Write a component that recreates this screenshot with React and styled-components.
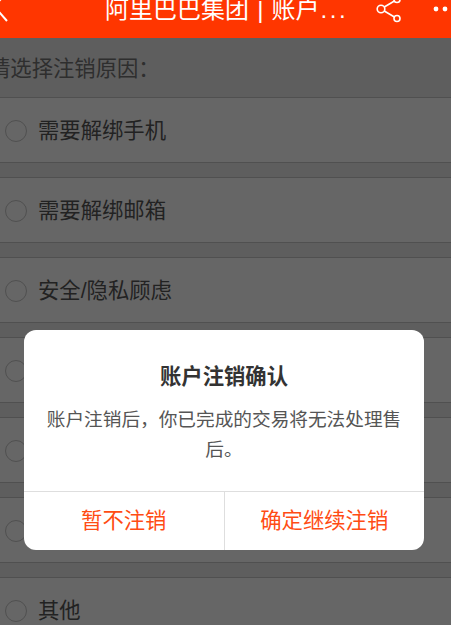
import React from "react";
import styled, { createGlobalStyle } from "styled-components";

const GlobalStyle = createGlobalStyle`
	html, body {
		margin: 0;
		padding: 0;
		height: 100%;
		overflow: hidden;
		background-color: #5e5e5e;
		font-family: "Liberation Sans", "Noto Sans CJK SC", sans-serif;
	}
`;

const Page = styled("div")`
	position: relative;
	width: 451px;
	height: 625px;
	overflow: hidden;
	background-color: #5e5e5e;
`;

const Header = styled("div")`
	display: flex;
	align-items: flex-start;
	height: 38px;
	background-color: #ff3600;
	color: #fff;
	overflow: hidden;
`;

const BackButton = styled("div")`
	width: 105px;
	flex-shrink: 0;
	display: flex;
`;

const Title = styled("div")`
	width: 269px;
	flex-shrink: 0;
	margin-top: -7px;
	font-size: 24px;
	line-height: 34px;
	word-spacing: 1.5px;
	white-space: nowrap;
`;

const TitleDots = styled("span")`
	margin-left: 1px;
	letter-spacing: 2.5px;
`;

const HeaderIcons = styled("div")`
	display: flex;
	align-items: flex-start;
	gap: 31px;
`;

const Prompt = styled("div")`
	height: 59px;
	margin-left: -11px;
	font-size: 21.33px;
	line-height: 62px;
	color: #2e2e2e;
	white-space: nowrap;
`;

const ReasonList = styled("div")`
	display: flex;
	flex-direction: column;
	gap: 14px;
`;

const Reason = styled("div")`
	display: flex;
	align-items: center;
	gap: 11px;
	height: 64px;
	padding-left: 5px;
	background-color: #666;
	border-top: 1px solid #505050;
	border-bottom: 1px solid #505050;
	font-size: 21.33px;
	color: #222;
`;

const Radio = styled("span")`
	width: 20px;
	height: 20px;
	margin-top: 2px;
	border: 1px solid #505050;
	border-radius: 50%;
`;

const ReasonLabel = styled("span")`
	margin-bottom: 3px;
`;

const Dialog = styled("div")`
	position: absolute;
	left: 24px;
	top: 330px;
	width: 400px;
	height: 220px;
	display: flex;
	flex-direction: column;
	border-radius: 12px;
	background-color: #fff;
	overflow: hidden;
`;

const DialogBody = styled("div")`
	flex: 1;
	padding: 0 20px;
	text-align: center;
`;

const DialogTitle = styled("div")`
	margin-top: 31px;
	font-size: 21.33px;
	line-height: 33px;
	font-weight: 700;
	color: #333;
`;

const DialogText = styled("div")`
	margin-top: 11px;
	font-size: 18.67px;
	line-height: 30px;
	color: #555;
`;

const DialogActions = styled("div")`
	display: flex;
	height: 58.5px;
	border-top: 1.5px solid #dedede;
`;

const DialogButton = styled("div")`
	flex: 1;
	display: flex;
	align-items: center;
	justify-content: center;
	padding-bottom: 5px;
	font-size: 21.33px;
	color: #ff4c14;

	& + & {
		border-left: 1.5px solid #dedede;
	}
`;

const reasons = ["需要解绑手机", "需要解绑邮箱", "安全/隐私顾虑", "", "", "", "其他"];

const BackIcon = () => (
	<svg width="10" height="24" viewBox="0 0 10 24" fill="none" stroke="#fff" strokeWidth="2">
		<path d="M7 -7L-6 6L7 21" />
	</svg>
);

const ShareIcon = () => (
	<svg width="28" height="24" viewBox="0 0 28 24" fill="none" stroke="#fff" strokeWidth="1.6">
		<circle cx="7" cy="9" r="3.8" />
		<circle cx="23" cy="18.5" r="3" />
		<circle cx="23" cy="-0.5" r="3" />
		<path d="M10.3 7L20.4 1M10.3 11L20.4 17" />
	</svg>
);

const MoreIcon = () => (
	<svg width="20" height="24" viewBox="0 0 20 24" fill="#fff">
		<circle cx="3" cy="9" r="2.4" />
		<circle cx="12" cy="9" r="2.4" />
	</svg>
);

const App = () => {
	return (
		<Page>
			<GlobalStyle />
			<Header>
				<BackButton>
					<BackIcon />
				</BackButton>
				<Title>
					阿里巴巴集团 | 账户<TitleDots>...</TitleDots>
				</Title>
				<HeaderIcons>
					<ShareIcon />
					<MoreIcon />
				</HeaderIcons>
			</Header>
			<Prompt>请选择注销原因：</Prompt>
			<ReasonList>
				{reasons.map((reason, i) => (
					<Reason key={i}>
						<Radio />
						<ReasonLabel>{reason}</ReasonLabel>
					</Reason>
				))}
			</ReasonList>
			<Dialog>
				<DialogBody>
					<DialogTitle>账户注销确认</DialogTitle>
					<DialogText>账户注销后，你已完成的交易将无法处理售后。</DialogText>
				</DialogBody>
				<DialogActions>
					<DialogButton>暂不注销</DialogButton>
					<DialogButton>确定继续注销</DialogButton>
				</DialogActions>
			</Dialog>
		</Page>
	);
};

export default App;
